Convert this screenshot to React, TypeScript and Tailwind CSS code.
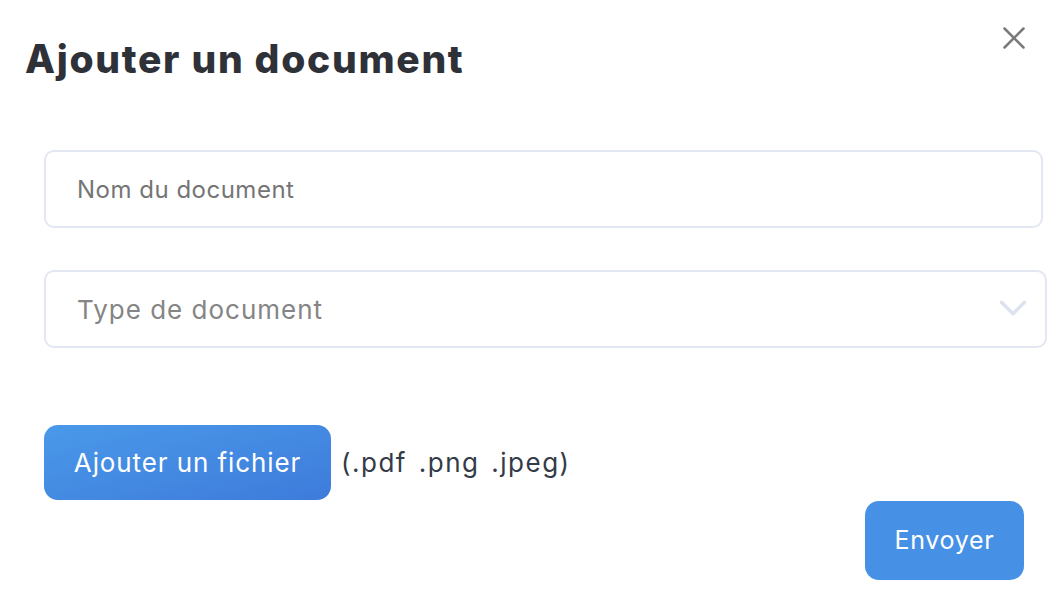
import { X, ChevronDown } from "lucide-react";

const App = () => {
  return (
    <div className="w-[1062px] h-[610px] bg-white relative font-['Inter',sans-serif]">
      <button className="absolute top-[19px] right-[29px] text-[#7a7a7a]">
        <X className="w-[38px] h-[38px]" strokeWidth={1.6} />
      </button>

      <div className="pl-[25px] pt-[33px]">
        <h2 className="text-[39px] font-extrabold tracking-[1.7px] text-[#2f3138] leading-[52px]">
          Ajouter un document
        </h2>
      </div>

      <div className="pl-[44px] mt-[65px] flex flex-col">
        <input
          type="text"
          placeholder="Nom du document"
          className="w-[999px] h-[78px] rounded-[10px] border-2 border-[#e3e7f2] px-[31px] text-[24px] tracking-[0.5px] text-[#333] placeholder:text-[#757575] outline-none"
        />
        <div className="relative mt-[42px] w-[1003px]">
          <select
            defaultValue=""
            className="appearance-none w-full h-[78px] rounded-[10px] border-2 border-[#e3e7f2] px-[31px] text-[26px] tracking-[1px] text-[#858585] bg-white outline-none"
          >
            <option value="" disabled>
              Type de document
            </option>
            <option value="id">Pièce d'identité</option>
            <option value="invoice">Facture</option>
          </select>
          <ChevronDown
            className="absolute right-[11px] top-[15px] w-[46px] h-[46px] text-[#dde2ef] pointer-events-none"
            strokeWidth={1.8}
          />
        </div>

        <div className="mt-[77px] flex items-center gap-[10px]">
          <button className="h-[75px] w-[287px] rounded-[14px] bg-gradient-to-br from-[#4a99e9] to-[#3e7bdb] text-white text-[26px] tracking-[0.9px]">
            Ajouter un fichier
          </button>
          <span className="text-[26px] tracking-[1.5px] [word-spacing:3px] text-[#333b48]">
            (.pdf .png .jpeg)
          </span>
        </div>
      </div>

      <div className="flex justify-end pr-[38px] mt-[1px]">
        <button className="h-[79px] w-[159px] rounded-[14px] bg-[#4690e6] text-white text-[25px] tracking-[0.7px]">
          Envoyer
        </button>
      </div>
    </div>
  );
};

export default App;
